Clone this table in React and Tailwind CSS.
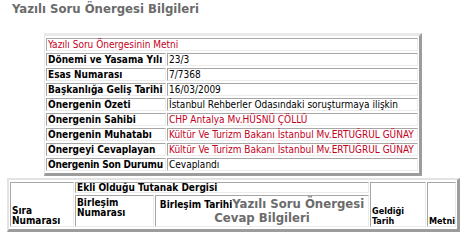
import React from "react";

const cell =
  "border border-t-[#a6a6a6] border-l-[#a6a6a6] border-r-[#ebebeb] border-b-[#ebebeb] px-px py-0";

const rows = [
  ["Dönemi ve Yasama Yılı", "23/3", false],
  ["Esas Numarası", "7/7368", false],
  ["Başkanlığa Geliş Tarihi", "16/03/2009", false],
  ["Önergenin Özeti", "İstanbul Rehberler Odasındaki soruşturmaya ilişkin", false],
  ["Önergenin Sahibi", "CHP Antalya Mv.HÜSNÜ ÇÖLLÜ", true],
  ["Önergenin Muhatabı", "Kültür Ve Turizm Bakanı İstanbul Mv.ERTUĞRUL GÜNAY", true],
  ["Önergeyi Cevaplayan", "Kültür Ve Turizm Bakanı İstanbul Mv.ERTUĞRUL GÜNAY", true],
  ["Önergenin Son Durumu", "Cevaplandı", false],
];

export default function App() {
  return (
    <div className="w-[469px] h-[243px] overflow-hidden bg-white text-black font-['DejaVu_Sans_Condensed','Liberation_Sans',sans-serif]">
      <h1 className="pl-[12px] pt-px text-[13px] leading-[16px] font-bold text-[#6b6b6b] whitespace-nowrap">
        Yazılı Soru Önergesi Bilgileri
      </h1>

      <table className="ml-[44px] mt-[16px] w-[378px] table-fixed border-separate border-spacing-x-px border-spacing-y-[2px] border-t-[3px] border-l border-r-[3px] border-b-[3px] border-t-[#e9e9e9] border-l-[#e9e9e9] border-r-[#9c9c9c] border-b-[#9c9c9c] text-[10px] leading-[11px]">
        <colgroup>
          <col className="w-[120px]" />
          <col />
        </colgroup>
        <tbody>
          <tr>
            <td colSpan={2} className={cell + " text-[#c4001c] whitespace-nowrap"}>
              Yazılı Soru Önergesinin Metni
            </td>
          </tr>
          {rows.map(([label, value, red]) => (
            <tr key={label}>
              <td
                className={
                  cell +
                  " font-bold whitespace-nowrap overflow-hidden " +
                  (label === "Önergenin Son Durumu" ? "tracking-[-0.2px]" : "tracking-normal")
                }
              >
                {label}
              </td>
              <td className={cell + " whitespace-nowrap " + (red ? "text-[#c4001c]" : "text-black")}>
                {value}
              </td>
            </tr>
          ))}
        </tbody>
      </table>

      <table className="ml-[7px] mt-[2px] w-[453px] table-fixed border-separate border-spacing-x-px border-spacing-y-[2px] border-t-2 border-l-2 border-r-[3px] border-b-[3px] border-t-[#e3e3e3] border-l-[#e3e3e3] border-r-[#9c9c9c] border-b-[#9c9c9c] text-[10px] font-bold">
        <colgroup>
          <col className="w-[64px]" />
          <col className="w-[79px]" />
          <col />
          <col className="w-[56px]" />
          <col className="w-[29px]" />
        </colgroup>
        <tbody>
          <tr>
            <td rowSpan={2} className={cell + " align-bottom leading-[10px]"}>
              Sıra
              <br />
              Numarası
            </td>
            <td colSpan={2} className={cell + " leading-[9px] whitespace-nowrap"}>
              Ekli Olduğu Tutanak Dergisi
            </td>
            <td rowSpan={2} className={cell + " align-bottom text-[9px] leading-[10px]"}>
              Geldiği
              <br />
              Tarih
            </td>
            <td rowSpan={2} className={cell + " align-bottom text-[9px] leading-[10px] whitespace-nowrap"}>
              Metni
            </td>
          </tr>
          <tr>
            <td className={cell + " align-top pt-[2px] leading-[10px]"}>
              Birleşim
              <br />
              Numarası
            </td>
            <td className={cell + " align-top pt-px pb-px text-center text-[13px] leading-[14px] text-[#6b6b6b] whitespace-nowrap"}>
              <span className="text-[10px] leading-[10px] text-black">Birleşim Tarihi</span>
              Yazılı Soru Önergesi
              <br />
              Cevap Bilgileri
            </td>
          </tr>
        </tbody>
      </table>
    </div>
  );
}
